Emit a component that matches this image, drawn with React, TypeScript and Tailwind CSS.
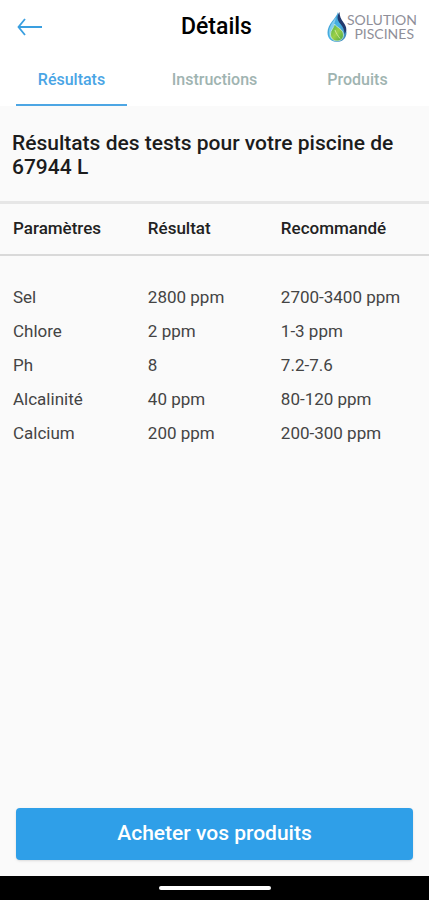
import React, { useState } from "react";

const tabs = ["Résultats", "Instructions", "Produits"];

const results = [
  { name: "Sel", value: "2800 ppm", recommended: "2700-3400 ppm" },
  { name: "Chlore", value: "2 ppm", recommended: "1-3 ppm" },
  { name: "Ph", value: "8", recommended: "7.2-7.6" },
  { name: "Alcalinité", value: "40 ppm", recommended: "80-120 ppm" },
  { name: "Calcium", value: "200 ppm", recommended: "200-300 ppm" },
];

const Logo: React.FC = () => (
  <div className="flex items-center">
    <svg viewBox="0 0 20 32" className="h-8 w-5" aria-hidden="true">
      <defs>
        <linearGradient id="drop" x1="0" y1="0" x2="1" y2="1">
          <stop offset="0" stopColor="#3f8fc4" />
          <stop offset="0.5" stopColor="#48b4e6" />
          <stop offset="1" stopColor="#3d7fae" />
        </linearGradient>
        <linearGradient id="leaf" x1="0" y1="0" x2="1" y2="1">
          <stop offset="0" stopColor="#3fae52" />
          <stop offset="0.5" stopColor="#9fd048" />
          <stop offset="1" stopColor="#3fa548" />
        </linearGradient>
      </defs>
      <path
        d="M11 1C9.500 7 0.500 13 0.500 21.500C0.500 27.500 4.500 31 10 31C15.500 31 19.500 27 19.500 21.500C19.500 15 12.500 9 11 1Z"
        fill="url(#drop)"
      />
      <path
        d="M12.500 1C9.500 6 10 9 13.500 13C16 16 17.500 18.500 17.500 23C20.500 19 19.500 15.500 16.500 11.500C14 8 12.500 5 12.500 1Z"
        fill="#233a6e"
      />
      <path
        d="M9 6C5 12 2 16 2 21.500C2 25 3.500 27 5 28C2.500 20 8 15 9 6Z"
        fill="#7fcdf0"
      />
      <path
        d="M7.500 13C9.500 16.500 16.500 18 16.500 24C16.500 28 13 30 10 30C6 30 3.500 27 3.500 23C3.500 19 7 17 7.500 13Z"
        fill="url(#leaf)"
        stroke="#d3eef0"
        strokeWidth="0.7"
      />
      <path
        d="M8 19C9 22 11 25 13 27.500"
        fill="none"
        stroke="#e0f0a8"
        strokeWidth="0.8"
      />
    </svg>
    <div className="text-right font-['Lato'] text-sm leading-[14px] text-[#8f8f99]">
      <div>SOLUTION</div>
      <div className="pr-[3px]">PISCINES</div>
    </div>
  </div>
);

const App: React.FC = () => {
  const [activeTab, setActiveTab] = useState("Résultats");

  return (
    <div className="flex min-h-screen flex-col bg-[#fafafa] font-['Roboto',sans-serif] text-black">
      <header className="bg-white">
        <div className="grid h-[54px] grid-cols-3 items-center pr-3 pl-4">
          <button type="button" aria-label="Retour" className="w-7">
            <svg
              viewBox="0 0 28 20"
              className="h-5 w-7"
              fill="none"
              stroke="#3a9fe0"
              strokeWidth="1.800"
            >
              <path d="M26 10H2.500M9 2L2.500 10L9 18" />
            </svg>
          </button>
          <h1 className="text-center text-[23px] font-medium">Détails</h1>
          <div className="flex justify-end">
            <Logo />
          </div>
        </div>
        <div role="tablist" className="grid grid-cols-3">
          {tabs.map((tab) => (
            <button
              key={tab}
              type="button"
              role="tab"
              aria-selected={tab === activeTab}
              onClick={() => setActiveTab(tab)}
              className={
                tab === activeTab
                  ? "mx-4 h-[52px] border-b-2 border-[#4da6e4] pt-0.5 text-base font-medium text-[#4aa5e5]"
                  : "mx-4 h-[52px] border-b-2 border-transparent pt-0.5 text-base font-medium text-[#9fb4b1]"
              }
            >
              {tab}
            </button>
          ))}
        </div>
      </header>

      <main className="grow">
        <h2 className="px-3 pt-[25px] pb-[22px] text-[21px] leading-6 font-medium text-[#1c1c1c]">
          Résultats des tests pour votre piscine de 67944 L
        </h2>
        <table className="w-full table-fixed border-collapse text-left text-[17px]">
          <colgroup>
            <col className="w-[34%]" />
            <col className="w-[31%]" />
            <col />
          </colgroup>
          <thead className="border-t-3 border-b-2 border-t-[#e6e6e6] border-b-[#d9d9d9]">
            <tr className="h-[52px] text-[#222222]">
              <th className="pl-[13px] font-medium">Paramètres</th>
              <th className="pl-0.5 font-medium">Résultat</th>
              <th className="pl-0.5 font-medium">Recommandé</th>
            </tr>
          </thead>
          <tbody className="text-[#444444] before:block before:h-[25px]">
            {results.map((result) => (
              <tr key={result.name} className="h-[34px]">
                <td className="pl-[13px]">{result.name}</td>
                <td className="pl-0.5">{result.value}</td>
                <td className="pl-0.5">{result.recommended}</td>
              </tr>
            ))}
          </tbody>
        </table>
      </main>

      <div className="px-4 pb-4">
        <button
          type="button"
          className="h-[52px] w-full rounded bg-[#2f9fe8] text-[21px] font-medium text-white shadow"
        >
          Acheter vos produits
        </button>
      </div>
      <div className="flex h-6 items-center justify-center bg-black">
        <div className="h-1 w-28 rounded-full bg-white" />
      </div>
    </div>
  );
};

export default App;
